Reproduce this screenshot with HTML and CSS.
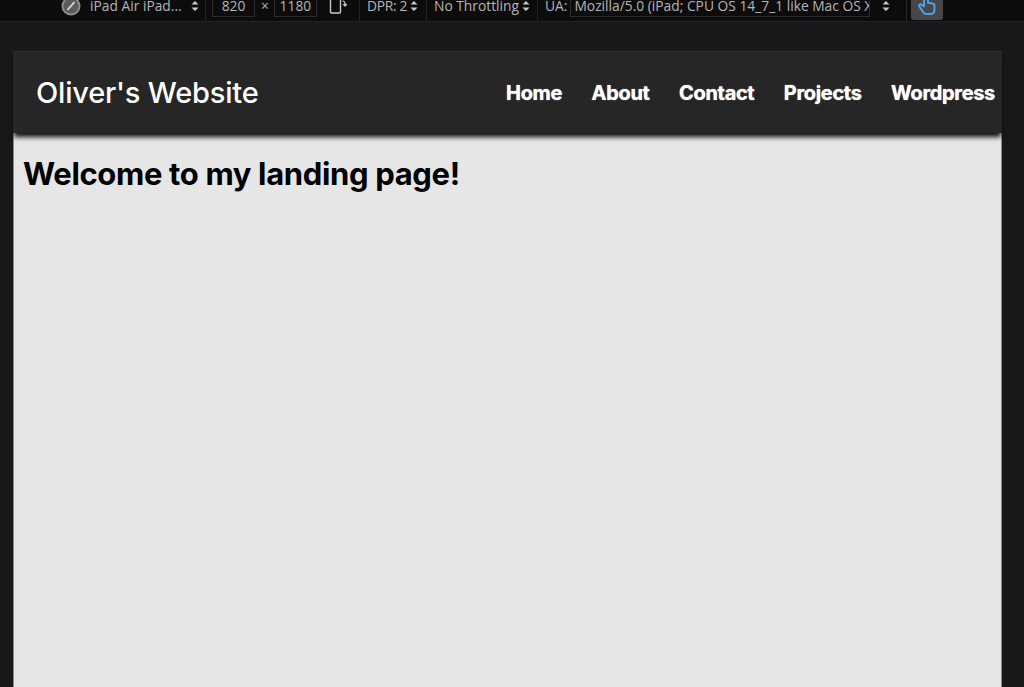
FILE: index.html
```html
<!DOCTYPE html>
<html lang="en">
<head>
<meta charset="utf-8">
<title>Oliver's Website</title>
<link rel="stylesheet" href="styles.css">
</head>
<body>
<div class="toolbar">
  <div class="seg seg-device">
    <svg class="compass" width="20" height="20" viewBox="0 0 20 20"><circle cx="10" cy="10" r="9.5" fill="#8c8c8c"/><circle cx="10" cy="10" r="7.6" fill="#5c5c5c"/><path d="M6.5 14 L13.5 6" stroke="#dcdcdc" stroke-width="1.8"/></svg>
    <span class="device-name">iPad Air iPad...</span>
    <svg class="updown" width="8" height="12" viewBox="0 0 8 12"><path d="M4 1 L7.5 4.6 H0.5 Z M4 11 L7.5 7.4 H0.5 Z" fill="#c8c8c8"/></svg>
  </div>
  <div class="seg seg-size">
    <span class="box box-w">820</span>
    <span class="times">×</span>
    <span class="box box-h">1180</span>
    <svg class="rotate" width="20" height="20" viewBox="0 0 20 20"><rect x="1.5" y="1" width="10" height="16" rx="1" fill="none" stroke="#c8c8c8" stroke-width="1.4"/><path d="M13.5 5 C15.5 5 16 6 16 8" fill="none" stroke="#c8c8c8" stroke-width="1.2"/><path d="M13.5 8 H18.5 L16 11 Z" fill="#c8c8c8"/></svg>
  </div>
  <div class="seg seg-dpr">
    <span>DPR: 2</span>
    <svg width="8" height="12" viewBox="0 0 8 12"><path d="M4 1 L7.5 4.6 H0.5 Z M4 11 L7.5 7.4 H0.5 Z" fill="#c8c8c8"/></svg>
  </div>
  <div class="seg seg-throttle">
    <span>No Throttling</span>
    <svg width="8" height="12" viewBox="0 0 8 12"><path d="M4 1 L7.5 4.6 H0.5 Z M4 11 L7.5 7.4 H0.5 Z" fill="#c8c8c8"/></svg>
  </div>
  <div class="seg seg-ua">
    <span>UA:</span>
    <span class="box box-ua">Mozilla/5.0 (iPad; CPU OS 14_7_1 like Mac OS X)</span>
    <svg class="ua-arrows" width="8" height="12" viewBox="0 0 8 12"><path d="M4 1 L7.5 4.6 H0.5 Z M4 11 L7.5 7.4 H0.5 Z" fill="#c8c8c8"/></svg>
  </div>
  <div class="seg seg-touch">
    <div class="touch-btn">
      <svg width="20" height="28" viewBox="0 0 20 28"><path d="M7 4 V15.5 L4.4 13.6 C3 12.6 1.4 14.2 2.4 15.6 L6.6 21.6 C7.4 22.6 8.4 23 9.6 23 H13.6 C15.8 23 17.4 21.4 17.4 19.2 V14.6 C17.4 13.4 16.4 12.6 15.2 12.6 L11 11.8 V4 C11 1.4 7 1.4 7 4 Z" fill="none" stroke="#4d9fe8" stroke-width="2" stroke-linejoin="round"/></svg>
    </div>
  </div>
</div>
<div class="stage">
  <div class="page">
    <header class="site-header">
      <div class="brand">Oliver's Website</div>
      <nav class="site-nav">
        <a class="nav-link">Home</a>
        <a class="nav-link">About</a>
        <a class="nav-link">Contact</a>
        <a class="nav-link">Projects</a>
        <a class="nav-link">Wordpress</a>
      </nav>
    </header>
    <main class="content">
      <h1 class="headline">Welcome to my landing page!</h1>
    </main>
  </div>
</div>
</body>
</html>
```
FILE: styles.css
```css
* { box-sizing: border-box; }
html, body { margin: 0; height: 100%; overflow: hidden; }
body {
  display: flex;
  flex-direction: column;
  background: #18181a;
  font-family: "Inter", "Liberation Sans", sans-serif;
}
.toolbar {
  display: flex;
  flex: none;
  height: 22px;
  overflow: hidden;
  background: #0c0c0d;
  border-bottom: 1px solid #222224;
  color: #b4b4b6;
  font: 13.8px/1 "Open Sans", "Liberation Sans", sans-serif;
}
.seg {
  display: flex;
  flex: none;
  align-items: center;
  height: 21px;
  border-right: 1px solid #242426;
  padding-bottom: 10px;
  white-space: nowrap;
}
.seg-device { width: 206px; padding-left: 61px; }
.compass { flex: none; }
.device-name { margin-left: 9px; }
.updown { flex: none; margin-left: 9px; }
.seg-size { width: 154px; padding-left: 6px; }
.box {
  display: block;
  flex: none;
  align-self: flex-start;
  height: 24px;
  margin-top: -7px;
  padding-top: 5px;
  border: 1px solid #2c2c2e;
  color: #b4b4b6;
  overflow: hidden;
}
.box-w { width: 43px; text-align: center; }
.box-h { width: 43px; text-align: center; }
.times { margin: 0 5px 0 6px; }
.rotate { flex: none; margin-left: 12px; }
.seg-dpr { width: 67px; padding-left: 7px; gap: 3px; letter-spacing: -0.3px; }
.seg-throttle { width: 111px; padding-left: 7px; gap: 3px; }
.seg-ua { width: 369px; padding-left: 7px; }
.box-ua { width: 300px; margin-left: 3px; padding-left: 3px; }
.ua-arrows { flex: none; margin-left: 12px; }
.seg-touch { flex: 1; padding: 0 0 0 4px; align-items: flex-start; border-right: 0; }
.touch-btn {
  display: flex;
  justify-content: center;
  align-items: flex-end;
  width: 32px;
  height: 20px;
  background: #47474a;
  border-radius: 0 0 3px 3px;
  overflow: hidden;
}
.touch-btn svg { flex: none; margin-bottom: 1px; }
.stage {
  flex: 1;
  min-height: 0;
  padding: 29px 22px 0 13px;
}
.page {
  display: flex;
  flex-direction: column;
  height: 100%;
  background: #e6e6e6;
  border-right: 1px solid #8a8a8a;
  border-left: 1px solid #8a8a8a;
}
.site-header {
  display: flex;
  flex: none;
  justify-content: space-between;
  align-items: center;
  height: 82px;
  margin: 0 -1px;
  padding: 0 7px 0 23px;
  background: #262626;
  border-top: 1px solid #2e2e2e;
  color: #fff;
  box-shadow: 0 5px 5px -1px rgba(0, 0, 0, 0.95);
}
.brand { font-size: 29px; font-weight: 500; letter-spacing: -0.2px; }
.site-nav { display: flex; gap: 29.5px; margin-top: 1px; }
.nav-link {
  font-size: 20px;
  font-weight: 700;
  letter-spacing: -0.33px;
  color: #fff;
  text-shadow: 0 0 1px #fff;
}
.content { flex: 1; padding: 0 9px; color: #000; }
.headline {
  margin: 21px 0 0;
  font-size: 31px;
  line-height: 40px;
  font-weight: 700;
  letter-spacing: -0.35px;
}
```
